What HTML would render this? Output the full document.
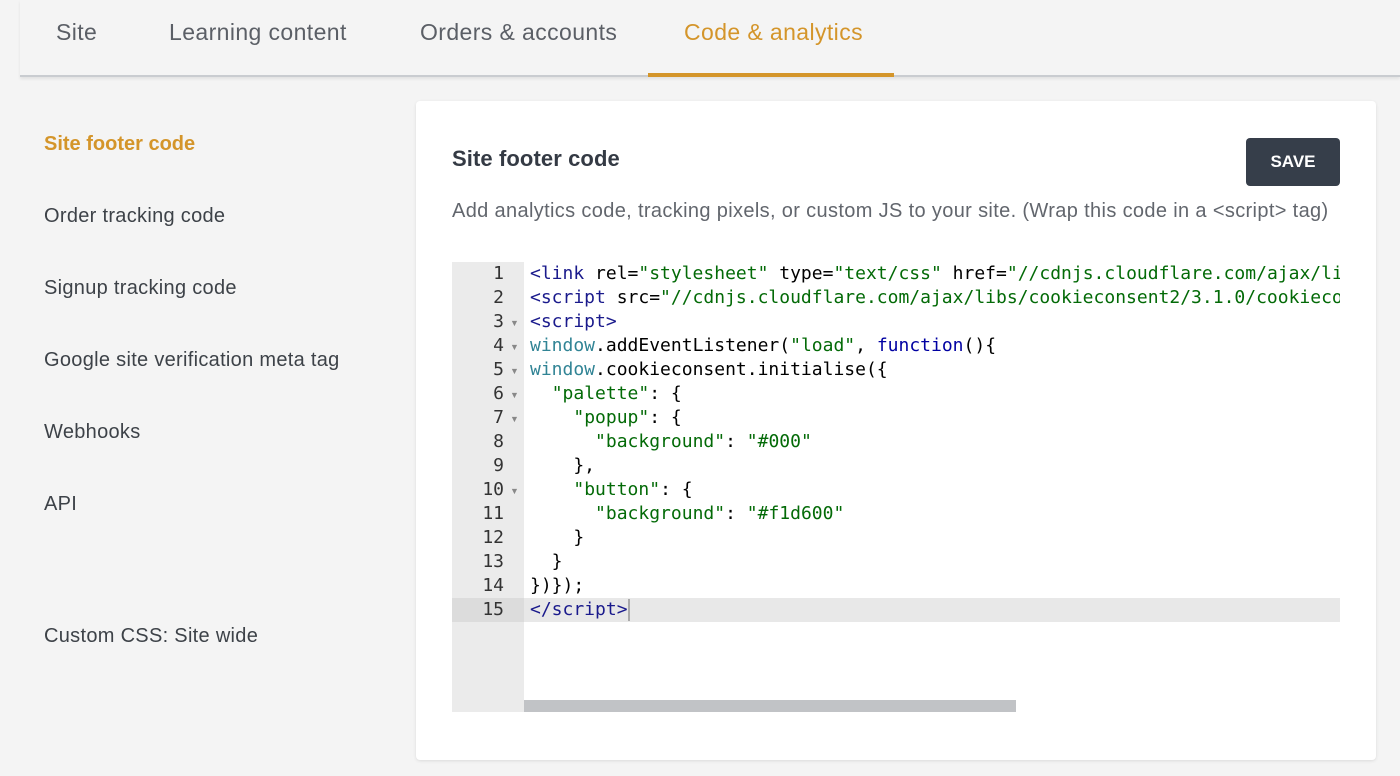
<!DOCTYPE html>
<html><head><meta charset="utf-8"><style>
*{margin:0;padding:0;box-sizing:border-box}
body{width:1400px;height:776px;background:#f4f4f4;font-family:"Liberation Sans",sans-serif;position:relative;overflow:hidden;color:#3d4248}
.tabs{position:absolute;left:20px;top:0;width:1380px;height:77px;border-bottom:2px solid #c9ccd0;box-shadow:0 2px 3px rgba(0,0,0,.08)}
.tab{position:absolute;top:19px;font-size:23px;color:#5b5f66;letter-spacing:0.4px}
.tab.on{color:#d4952a}
.ul{position:absolute;left:648px;top:73px;width:246px;height:4px;background:#d4952a}
.side{position:absolute;left:44px;font-size:20px;color:#3d4248;letter-spacing:0.3px}
.card{position:absolute;left:416px;top:101px;width:960px;height:659px;background:#fff;border-radius:4px;box-shadow:0 1px 3px rgba(0,0,0,.1)}
h2{position:absolute;left:452px;top:146px;font-size:22px;color:#343a44;font-weight:bold;letter-spacing:0.1px}
.btn{position:absolute;left:1246px;top:138px;width:94px;height:48px;background:#363e4a;border-radius:4px;color:#fff;font-weight:bold;font-size:17px;text-align:center;line-height:48px}
.desc{position:absolute;left:452px;top:200px;font-size:20px;color:#62666d;letter-spacing:0.35px}
.ed{position:absolute;left:452px;top:262px;width:888px;height:450px;background:#fff;overflow:hidden}
.gut{position:absolute;left:0;top:0;width:72px;height:450px;background:#ebebeb}
.act{position:absolute;left:0;top:336px;width:888px;height:24px;background:#e8e8e8}
.gact{position:absolute;left:0;top:336px;width:72px;height:24px;background:#dcdcdc}
.ln,.code{position:absolute;top:0;font-family:"DejaVu Sans Mono",monospace;font-size:18px;line-height:24px;white-space:pre}
.ln{left:0;width:52px;text-align:right;color:#333}
.fold{position:absolute;left:58px;font-size:9px;color:#888}
.code{left:78px;color:#000}
.t{color:#1a1a8c}.s{color:#036a07}.k{color:#0000a2}.w{color:#318495}
.sb{position:absolute;left:72px;top:438px;width:492px;height:12px;background:#c1c3c6}
.cur{display:inline-block;width:2px;height:22px;background:#aaa;vertical-align:middle}
</style></head><body>
<div class="tabs"></div>
<div class="tab" style="left:56px">Site</div>
<div class="tab" style="left:169px">Learning content</div>
<div class="tab" style="left:420px">Orders &amp; accounts</div>
<div class="tab on" style="left:684px">Code &amp; analytics</div>
<div class="ul"></div>
<div class="side" style="top:133px;color:#d4952a;font-weight:bold;letter-spacing:0">Site footer code</div>
<div class="side" style="top:205px">Order tracking code</div>
<div class="side" style="top:277px">Signup tracking code</div>
<div class="side" style="top:349px">Google site verification meta tag</div>
<div class="side" style="top:421px">Webhooks</div>
<div class="side" style="top:493px">API</div>
<div class="side" style="top:625px">Custom CSS: Site wide</div>
<div class="card"></div>
<h2>Site footer code</h2>
<div class="btn">SAVE</div>
<div class="desc">Add analytics code, tracking pixels, or custom JS to your site. (Wrap this code in a &lt;script&gt; tag)</div>
<div class="ed">
<div class="gut"></div><div class="act"></div><div class="gact"></div>
<div class="ln">1
2
3
4
5
6
7
8
9
10
11
12
13
14
15</div>
<div class="fold" style="top:56px">▼</div><div class="fold" style="top:80px">▼</div><div class="fold" style="top:104px">▼</div><div class="fold" style="top:128px">▼</div><div class="fold" style="top:152px">▼</div><div class="fold" style="top:224px">▼</div>
<div class="code"><span class="t">&lt;link</span> rel=<span class="s">"stylesheet"</span> type=<span class="s">"text/css"</span> href=<span class="s">"//cdnjs.cloudflare.com/ajax/libs/cookieconsent2/3.1.0/cookieconsent.min.css"</span> <span class="t">/&gt;</span>
<span class="t">&lt;script</span> src=<span class="s">"//cdnjs.cloudflare.com/ajax/libs/cookieconsent2/3.1.0/cookieconsent.min.js"</span><span class="t">&gt;</span>
<span class="t">&lt;script&gt;</span>
<span class="w">window</span>.addEventListener(<span class="s">"load"</span>, <span class="k">function</span>(){
<span class="w">window</span>.cookieconsent.initialise({
  <span class="s">"palette"</span>: {
    <span class="s">"popup"</span>: {
      <span class="s">"background"</span>: <span class="s">"#000"</span>
    },
    <span class="s">"button"</span>: {
      <span class="s">"background"</span>: <span class="s">"#f1d600"</span>
    }
  }
})});
<span class="t">&lt;/script&gt;</span><span class="cur"></span></div>
<div class="sb"></div>
</div>
</body></html>
